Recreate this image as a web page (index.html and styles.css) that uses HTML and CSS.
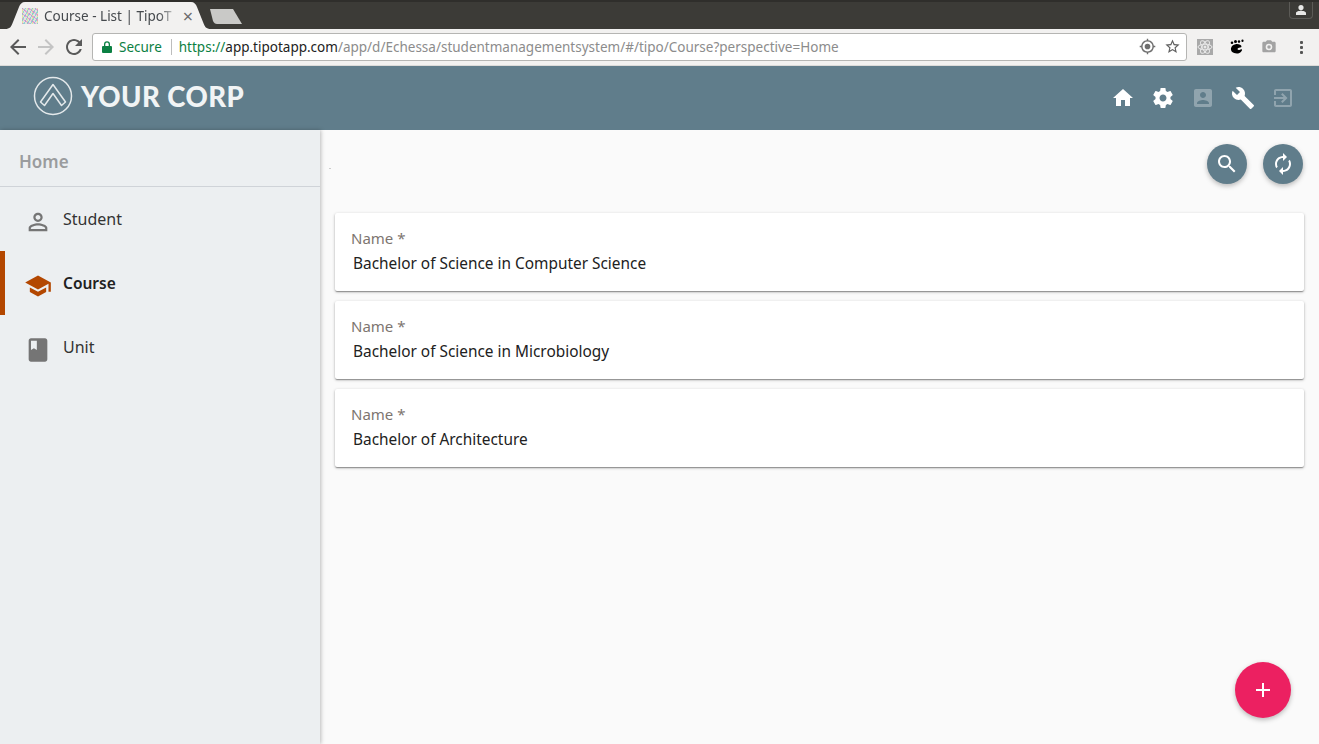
FILE: index.html
```html
<!DOCTYPE html>
<html lang="en">
<head>
<meta charset="utf-8">
<title>Course - List | TipoTapp</title>
<link rel="stylesheet" href="styles.css">
</head>
<body>
<div class="tabstrip">
  <div class="tab">
    <svg class="tab-shape" width="206" height="27" viewBox="0 0 206 27"><path d="M0 27C5 27 6 25 8 20L14 5C15 2 17 0 20 0H186C189 0 191 2 192 5L198 20C200 25 201 27 206 27Z" fill="#f2f1f0"/></svg>
    <span class="favicon"></span>
    <span class="tab-title">Course - List | TipoT</span>
    <span class="tab-close">×</span>
  </div>
  <svg class="newtab" width="34" height="15" viewBox="0 0 34 15"><path d="M1 0H24L33 15H8C6 15 5 14 4 12Z" fill="#c9c9c7"/></svg>
  <div class="profile"><svg width="12" height="12" viewBox="0 0 24 24"><path fill="#e8e8e6" d="M12 2a5 5 0 1 1 0 10.400A5 5 0 0 1 12 2zM2 22v-4c0-3 6-4.500 10-4.500s10 1.500 10 4.500v4z"/></svg></div>
</div>
<div class="toolbar">
  <svg class="nav-icon" viewBox="0 0 24 24"><path fill="#5a5a5a" d="M20 11H7.830l5.590-5.590L12 4l-8 8 8 8 1.410-1.410L7.830 13H20v-2z"/></svg>
  <svg class="nav-icon" viewBox="0 0 24 24"><path fill="#c4c4c4" d="M12 4l-1.410 1.410L16.170 11H4v2h12.170l-5.580 5.590L12 20l8-8z"/></svg>
  <svg class="nav-icon" viewBox="0 0 24 24"><path fill="#5a5a5a" d="M17.650 6.350C16.200 4.900 14.210 4 12 4c-4.420 0-7.990 3.580-7.990 8s3.570 8 7.990 8c3.730 0 6.840-2.550 7.730-6h-2.080c-.82 2.330-3.040 4-5.650 4-3.310 0-6-2.690-6-6s2.690-6 6-6c1.660 0 3.140.69 4.220 1.780L13 11h7V4l-2.350 2.350z"/></svg>
  <div class="omnibox">
    <svg class="lock" width="10" height="12" viewBox="0 0 10 12"><path fill="#0b8043" d="M1 5h1V3.200a3 3 0 0 1 6 0V5h1a1 1 0 0 1 1 1v5a1 1 0 0 1-1 1H1a1 1 0 0 1-1-1V6a1 1 0 0 1 1-1zM3.300 5h3.400V3.200a1.700 1.700 0 0 0-3.400 0z"/></svg>
    <span class="secure">Secure</span>
    <span class="divider"></span>
    <span class="url"><span class="scheme">https://</span><span class="host">app.tipotapp.com</span>/app/d/Echessa/studentmanagementsystem/#/tipo/Course?perspective=Home</span>
    <svg class="omni-icon" viewBox="0 0 24 24"><path fill="#6f6f6f" d="M12 8a4 4 0 1 0 0 8 4 4 0 0 0 0-8zm8.940 3A8.994 8.994 0 0 0 13 3.060V1h-2v2.060A8.994 8.994 0 0 0 3.060 11H1v2h2.060A8.994 8.994 0 0 0 11 20.940V23h2v-2.060A8.994 8.994 0 0 0 20.940 13H23v-2h-2.060zM12 19a7 7 0 1 1 0-14 7 7 0 0 1 0 14z"/></svg>
    <svg class="omni-icon" viewBox="0 0 24 24"><path fill="#5f5f5f" d="M22 9.240l-7.190-.62L12 2 9.190 8.630 2 9.240l5.460 4.730L5.820 21 12 17.270 18.180 21l-1.630-7.030L22 9.240zM12 15.400l-3.760 2.270 1-4.280-3.320-2.880 4.380-.38L12 6.100l1.710 4.040 4.380.38-3.320 2.880 1 4.280L12 15.400z"/></svg>
  </div>
  <div class="extensions">
    <svg width="16" height="16" viewBox="0 0 16 16"><rect width="16" height="16" fill="#a9a9a9"/><g fill="none" stroke="#e9e9e9" stroke-width="1"><ellipse cx="8" cy="8" rx="7" ry="2.800"/><ellipse cx="8" cy="8" rx="7" ry="2.800" transform="rotate(60 8 8)"/><ellipse cx="8" cy="8" rx="7" ry="2.800" transform="rotate(120 8 8)"/></g><circle cx="8" cy="8" r="1.500" fill="#e9e9e9"/></svg>
    <svg width="16" height="16" viewBox="0 0 16 16"><path fill="#000" d="M6.500 5.200c3-.4 6 .6 6 2.300 0 1.300-2.500 1-3.500 1.700-1 .8-.2 2 1.300 1.700 1.300-.3 2-1 2.600-.5.600.7-1.200 4.100-5 4.100C3.800 14.500 1.500 12.300 2 9.300 2.400 7 4.300 5.500 6.500 5.200z"/><circle cx="3" cy="3.800" r="1.300"/><circle cx="6.500" cy="2.600" r="1.500"/><ellipse cx="10" cy="2.600" rx="1.200" ry="1.400"/><ellipse cx="13.500" cy="1.800" rx="1.100" ry="1.300"/></svg>
    <svg width="16" height="16" viewBox="0 0 24 24"><path fill="#a3a3a3" d="M9 2L7.170 4H4c-1.100 0-2 .9-2 2v12c0 1.100.9 2 2 2h16c1.100 0 2-.9 2-2V6c0-1.100-.9-2-2-2h-3.170L15 2H9zm3 15a5 5 0 1 1 0-10 5 5 0 0 1 0 10zm0-2.400a2.600 2.600 0 1 0 0-5.200 2.600 2.600 0 0 0 0 5.200z"/></svg>
    <svg width="16" height="16" viewBox="0 0 16 16"><g fill="#555"><rect x="7" y="2" width="3" height="3" rx="1"/><rect x="7" y="7" width="3" height="3" rx="1"/><rect x="7" y="12" width="3" height="3" rx="1"/></g></svg>
  </div>
</div>
<header class="appbar">
  <div class="brand">
    <svg width="40" height="40" viewBox="0 0 40 40"><circle cx="20" cy="20" r="18.500" fill="none" stroke="#e4e9eb" stroke-width="1.500"/><path d="M7.500 26L20 8.500 32.500 26 28.500 29.500 20 17.500 11.500 29.500Z" fill="none" stroke="#e4e9eb" stroke-width="1.500" stroke-linejoin="round"/></svg>
    <span class="brand-name">YOUR CORP</span>
  </div>
  <nav class="app-actions">
    <svg class="app-icon" viewBox="0 0 24 24"><path d="M10 20v-6h4v6h5v-8h3L12 3 2 12h3v8z"/></svg>
    <svg class="app-icon" viewBox="0 0 24 24"><path d="M19.430 12.980c.04-.32.07-.64.07-.98s-.03-.66-.07-.98l2.110-1.650c.19-.15.24-.42.12-.64l-2-3.460c-.12-.22-.39-.3-.61-.22l-2.490 1c-.52-.4-1.080-.73-1.690-.98l-.38-2.650C14.460 2.180 14.250 2 14 2h-4c-.25 0-.46.18-.49.42l-.38 2.650c-.61.25-1.170.59-1.690.98l-2.490-1c-.23-.09-.49 0-.61.22l-2 3.460c-.13.22-.07.49.12.64l2.110 1.650c-.04.32-.07.65-.07.98s.03.66.07.98l-2.110 1.650c-.19.15-.24.42-.12.64l2 3.460c.12.22.39.3.61.22l2.490-1c.52.4 1.080.73 1.690.98l.38 2.650c.03.24.24.42.49.42h4c.25 0 .46-.18.49-.42l.38-2.650c.61-.25 1.170-.59 1.690-.98l2.490 1c.23.09.49 0 .61-.22l2-3.460c.12-.22.07-.49-.12-.64l-2.110-1.650zM12 15.500c-1.930 0-3.500-1.570-3.500-3.500s1.570-3.500 3.500-3.500 3.500 1.570 3.500 3.500-1.570 3.500-3.500 3.500z"/></svg>
    <svg class="app-icon dim" viewBox="0 0 24 24"><path d="M3 5v14c0 1.100.89 2 2 2h14c1.100 0 2-.9 2-2V5c0-1.100-.9-2-2-2H5c-1.110 0-2 .9-2 2zm12 4c0 1.660-1.340 3-3 3s-3-1.340-3-3 1.340-3 3-3 3 1.340 3 3zm-9 8c0-2 4-3.100 6-3.100s6 1.100 6 3.100v1H6v-1z"/></svg>
    <svg class="app-icon" viewBox="0 0 24 24"><path d="M22.700 19l-9.100-9.100c.9-2.300.4-5-1.500-6.900-2-2-5-2.400-7.400-1.300L9 6 6 9 1.600 4.700C.4 7.100.9 10.100 2.900 12.100c1.900 1.900 4.600 2.400 6.900 1.500l9.100 9.100c.4.4 1 .4 1.400 0l2.300-2.300c.5-.4.5-1.100.1-1.400z"/></svg>
    <svg class="app-icon dim" viewBox="0 0 24 24"><path d="M10.090 15.590L11.500 17l5-5-5-5-1.410 1.410L12.670 11H3v2h9.670l-2.580 2.590zM19 3H5c-1.110 0-2 .9-2 2v4h2V5h14v14H5v-4H3v4c0 1.100.89 2 2 2h14c1.100 0 2-.9 2-2V5c0-1.100-.9-2-2-2z"/></svg>
  </nav>
</header>
<div class="layout">
  <aside class="sidebar">
    <div class="side-title">Home</div>
    <a class="side-item">
      <svg class="side-icon" viewBox="0 0 24 24"><path d="M12 5.900c1.160 0 2.100.94 2.100 2.100s-.94 2.100-2.100 2.100S9.900 9.160 9.900 8s.94-2.100 2.100-2.100m0 9c2.970 0 6.100 1.460 6.100 2.100v1.100H5.900V17c0-.64 3.130-2.100 6.100-2.100M12 4C9.790 4 8 5.790 8 8s1.790 4 4 4 4-1.790 4-4-1.790-4-4-4zm0 9c-2.670 0-8 1.340-8 4v3h16v-3c0-2.660-5.330-4-8-4z"/></svg>
      <span>Student</span>
    </a>
    <a class="side-item active">
      <svg class="side-icon" viewBox="0 0 24 24"><path d="M5 13.180v4L12 21l7-3.820v-4L12 17l-7-3.820zM12 3L1 9l11 6 9-4.910V17h2V9L12 3z"/></svg>
      <span>Course</span>
    </a>
    <a class="side-item">
      <svg class="side-icon" viewBox="0 0 24 24"><path d="M18 2H6c-1.100 0-2 .9-2 2v16c0 1.100.9 2 2 2h12c1.100 0 2-.9 2-2V4c0-1.100-.9-2-2-2zM6 4h5v8l-2.500-1.500L6 12V4z"/></svg>
      <span>Unit</span>
    </a>
  </aside>
  <main class="content">
    <div class="actions">
      <span class="speck"></span>
      <button class="round"><svg viewBox="0 0 24 24"><path d="M15.500 14h-.79l-.28-.27C15.410 12.590 16 11.110 16 9.500 16 5.910 13.090 3 9.500 3S3 5.910 3 9.500 5.910 16 9.500 16c1.610 0 3.090-.59 4.230-1.570l.27.28v.79l5 4.990L20.490 19l-4.990-5zm-6 0C7.010 14 5 11.990 5 9.500S7.010 5 9.500 5 14 7.010 14 9.500 11.990 14 9.500 14z"/></svg></button>
      <button class="round"><svg viewBox="0 0 24 24"><path d="M12 6v3l4-4-4-4v3c-4.420 0-8 3.580-8 8 0 1.570.46 3.030 1.240 4.260L6.700 14.800c-.45-.83-.7-1.790-.7-2.800 0-3.310 2.690-6 6-6zm6.760 1.740L17.300 9.200c.44.84.7 1.790.7 2.800 0 3.310-2.690 6-6 6v-3l-4 4 4 4v-3c4.420 0 8-3.580 8-8 0-1.570-.46-3.030-1.240-4.260z"/></svg></button>
    </div>
    <div class="cards">
      <article class="card"><div class="label">Name *</div><div class="value">Bachelor of Science in Computer Science</div></article>
      <article class="card"><div class="label">Name *</div><div class="value">Bachelor of Science in Microbiology</div></article>
      <article class="card"><div class="label">Name *</div><div class="value">Bachelor of Architecture</div></article>
    </div>
  </main>
</div>
<button class="fab"><svg viewBox="0 0 24 24"><path d="M19 13h-6v6h-2v-6H5v-2h6V5h2v6h6v2z"/></svg></button>
</body>
</html>
```
FILE: styles.css
```css
* { box-sizing: border-box; }
html, body { margin: 0; height: 100%; overflow: hidden; }
body {
  font-family: "Noto Sans", "Open Sans", sans-serif;
  background: #fafafa;
  display: flex;
  flex-direction: column;
  height: 744px;
}

/* Browser chrome */
.tabstrip {
  height: 29px;
  flex: none;
  background: #3c3b37;
  border-top: 2px solid #2f2e2b;
  display: flex;
  align-items: flex-end;
  padding-left: 5px;
}
.tab {
  width: 206px;
  height: 27px;
  position: relative;
  display: flex;
  align-items: center;
  padding: 0 18px 0 17px;
  font-size: 13.5px;
  color: #45494d;
}
.tab-shape { position: absolute; left: 0; top: 0; }
.favicon {
  position: relative;
  width: 16px;
  height: 16px;
  flex: none;
  margin-right: 6px;
  background:
    repeating-linear-gradient(37deg, rgba(235, 90, 210, .5) 0 1px, transparent 1px 4px),
    repeating-linear-gradient(-61deg, rgba(90, 200, 210, .6) 0 1px, transparent 1px 3px),
    repeating-linear-gradient(90deg, rgba(225, 225, 110, .5) 0 1px, transparent 1px 5px),
    #e2e2dc;
}
.tab-title {
  position: relative;
  flex: 1;
  overflow: hidden;
  white-space: nowrap;
  -webkit-mask-image: linear-gradient(to right, #000 85%, transparent);
  mask-image: linear-gradient(to right, #000 85%, transparent);
}
.tab-close { position: relative; margin-left: 4px; font-size: 18px; line-height: 1; color: #6b6b6b; }
.newtab { flex: none; margin: 0 0 5px -2px; }
.profile {
  margin: 0 6px 10px auto;
  width: 24px;
  height: 17px;
  border: 1px solid #5c5b57;
  border-top: none;
  border-radius: 0 0 4px 4px;
  display: flex;
  align-items: center;
  justify-content: center;
}
.toolbar {
  height: 37px;
  flex: none;
  background: #f2f1f0;
  border-bottom: 1px solid #dcdbd9;
  display: flex;
  align-items: center;
  padding: 0 0 1px 6px;
}
.nav-icon { width: 24px; height: 24px; margin-right: 4px; flex: none; }
.omnibox {
  width: 1095px;
  height: 28px;
  margin-left: 2px;
  background: #fff;
  border: 1px solid #b5b5b3;
  border-radius: 3px;
  display: flex;
  align-items: center;
  padding: 0 5px 0 9px;
  font-size: 13.5px;
  color: #8c8c8c;
  white-space: nowrap;
}
.lock { flex: none; margin-right: 7px; }
.secure { color: #0b8043; }
.divider { width: 1px; height: 16px; background: #bdbdbd; margin: 0 7px 0 9px; flex: none; }
.url { flex: 1; overflow: hidden; }
.scheme { color: #0b8043; }
.host { color: #222; }
.omni-icon { width: 17px; height: 17px; margin-left: 8px; flex: none; }
.extensions { display: flex; align-items: center; gap: 16px; margin-left: 10px; }

/* App bar */
.appbar {
  height: 64px;
  flex: none;
  background: #607d8b;
  display: flex;
  align-items: center;
  justify-content: space-between;
  padding: 0 24px 0 33px;
}
.brand { display: flex; align-items: center; gap: 8px; padding-bottom: 4px; }
.brand-name {
  font-family: "Lato", "Liberation Sans", sans-serif;
  font-weight: 900;
  font-size: 27.5px;
  letter-spacing: .45px;
  color: #f1f4f5;
}
.app-actions { display: flex; gap: 16px; }
.app-icon { width: 24px; height: 24px; fill: #fff; }
.app-icon.dim { opacity: .3; }

/* Layout */
.layout { flex: 1; display: flex; min-height: 0; }
.sidebar {
  width: 320px;
  flex: none;
  background: #eceff1;
  box-shadow: 1px 0 4px rgba(0, 0, 0, .25);
  position: relative;
}
.side-title {
  height: 57px;
  padding: 20px 0 0 19px;
  font-size: 17px;
  line-height: 24px;
  font-weight: 600;
  color: #9a9c9e;
  border-bottom: 1px solid #cfd3d8;
}
.side-item {
  height: 64px;
  display: flex;
  align-items: center;
  gap: 11px;
  padding-left: 24px;
  font-size: 16px;
  color: #333;
}
.side-icon { width: 28px; height: 28px; fill: #757575; position: relative; top: 3px; }
.side-item.active {
  padding-left: 19px;
  border-left: 5px solid #b34700;
  font-size: 15.5px;
  font-weight: 600;
  color: #212121;
}
.side-item.active .side-icon { fill: #b34700; }

/* Content */
.content { flex: 1; min-width: 0; padding: 0 15px; }
.actions {
  height: 83px;
  display: flex;
  justify-content: flex-end;
  gap: 16px;
  padding: 14px 1px 0 0;
  position: relative;
}
.speck { position: absolute; left: -6px; top: 38px; width: 2px; height: 1px; background: #ccc; }
.round {
  width: 40px;
  height: 40px;
  padding: 8px;
  border: none;
  border-radius: 50%;
  background: #607d8b;
  box-shadow: 0 2px 5px rgba(0, 0, 0, .26);
}
.round svg { display: block; width: 24px; height: 24px; fill: #fff; }
.cards { display: flex; flex-direction: column; gap: 10px; }
.card {
  height: 78px;
  background: #fff;
  border-radius: 2px;
  box-shadow: 0 1px 3px rgba(0, 0, 0, .3), 0 1px 1px rgba(0, 0, 0, .16), 0 2px 1px -1px rgba(0, 0, 0, .14);
  padding: 14px 18px 0 16px;
}
.label { font-size: 15px; line-height: 22px; color: #7d7570; }
.value { font-size: 15.4px; line-height: 24px; color: #212121; padding-left: 2px; margin-top: 3px; }
.fab {
  position: fixed;
  left: 1235px;
  top: 662px;
  width: 56px;
  height: 56px;
  padding: 16px;
  border: none;
  border-radius: 50%;
  background: #ec2061;
  box-shadow: 0 2px 5px rgba(0, 0, 0, .26);
}
.fab svg { display: block; width: 24px; height: 24px; fill: #fff; }
```
